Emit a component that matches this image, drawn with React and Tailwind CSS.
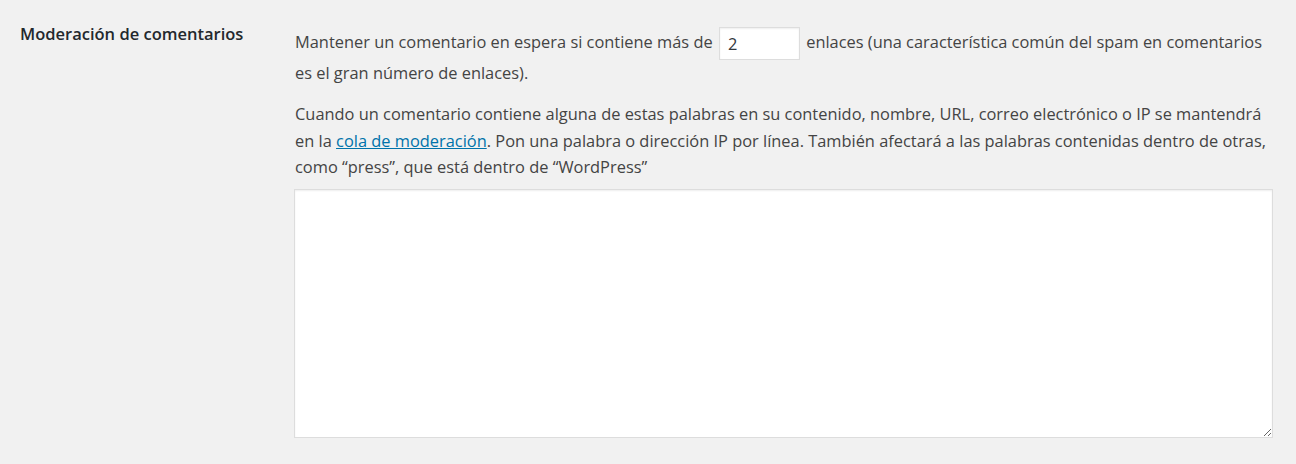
import React from 'react';

const font = { fontFamily: '"Open Sans", "Noto Sans", sans-serif' };

export default function App() {
  return (
    <div className="min-h-[464px] w-full bg-[#f1f1f1] text-[#444] [font-family:'Open_Sans','Noto_Sans',sans-serif]">
      <div className="flex pl-5 pr-6 pt-[22px]">
        {/* label column */}
        <div className="w-[274px] shrink-0">
          <h2 className="text-[16.5px] font-semibold leading-[24px] text-[#23282d]">Moderación de comentarios</h2>
        </div>

        {/* field column */}
        <div className="flex-1 min-w-0">
          <p className="mt-[5px] pl-px text-[16.4px] leading-[30px] whitespace-nowrap">
            Mantener un comentario en espera si contiene más de{' '}
            <input
              type="text"
              defaultValue="2"
              className="mx-[2px] -my-[2px] inline-block h-[33px] w-[81px] border border-[#ddd] bg-white px-2 align-middle text-[16.4px] text-[#32373c] shadow-[inset_0_1px_2px_rgba(0,0,0,0.07)] outline-none"
            />{' '}
            enlaces (una característica común del spam en comentarios
            <br />
            es el gran número de enlaces).
          </p>

          <p className="mt-[13px] pl-px text-[16.4px] leading-[26.5px] whitespace-nowrap">
            Cuando un comentario contiene alguna de estas palabras en su contenido, nombre, URL, correo electrónico o IP se mantendrá
            <br />
            en la{' '}
            <a href="#" className="text-[#0073aa] underline">
              cola de moderación
            </a>
            . Pon una palabra o dirección IP por línea. También afectará a las palabras contenidas dentro de otras,
            <br />
            como “press”, que está dentro de “WordPress”
          </p>

          <textarea
            className="mt-[8px] block h-[249px] w-[979px] border border-[#ddd] bg-white shadow-[inset_0_1px_2px_rgba(0,0,0,0.07)] outline-none"
            style={font}
          />
        </div>
      </div>
    </div>
  );
}
